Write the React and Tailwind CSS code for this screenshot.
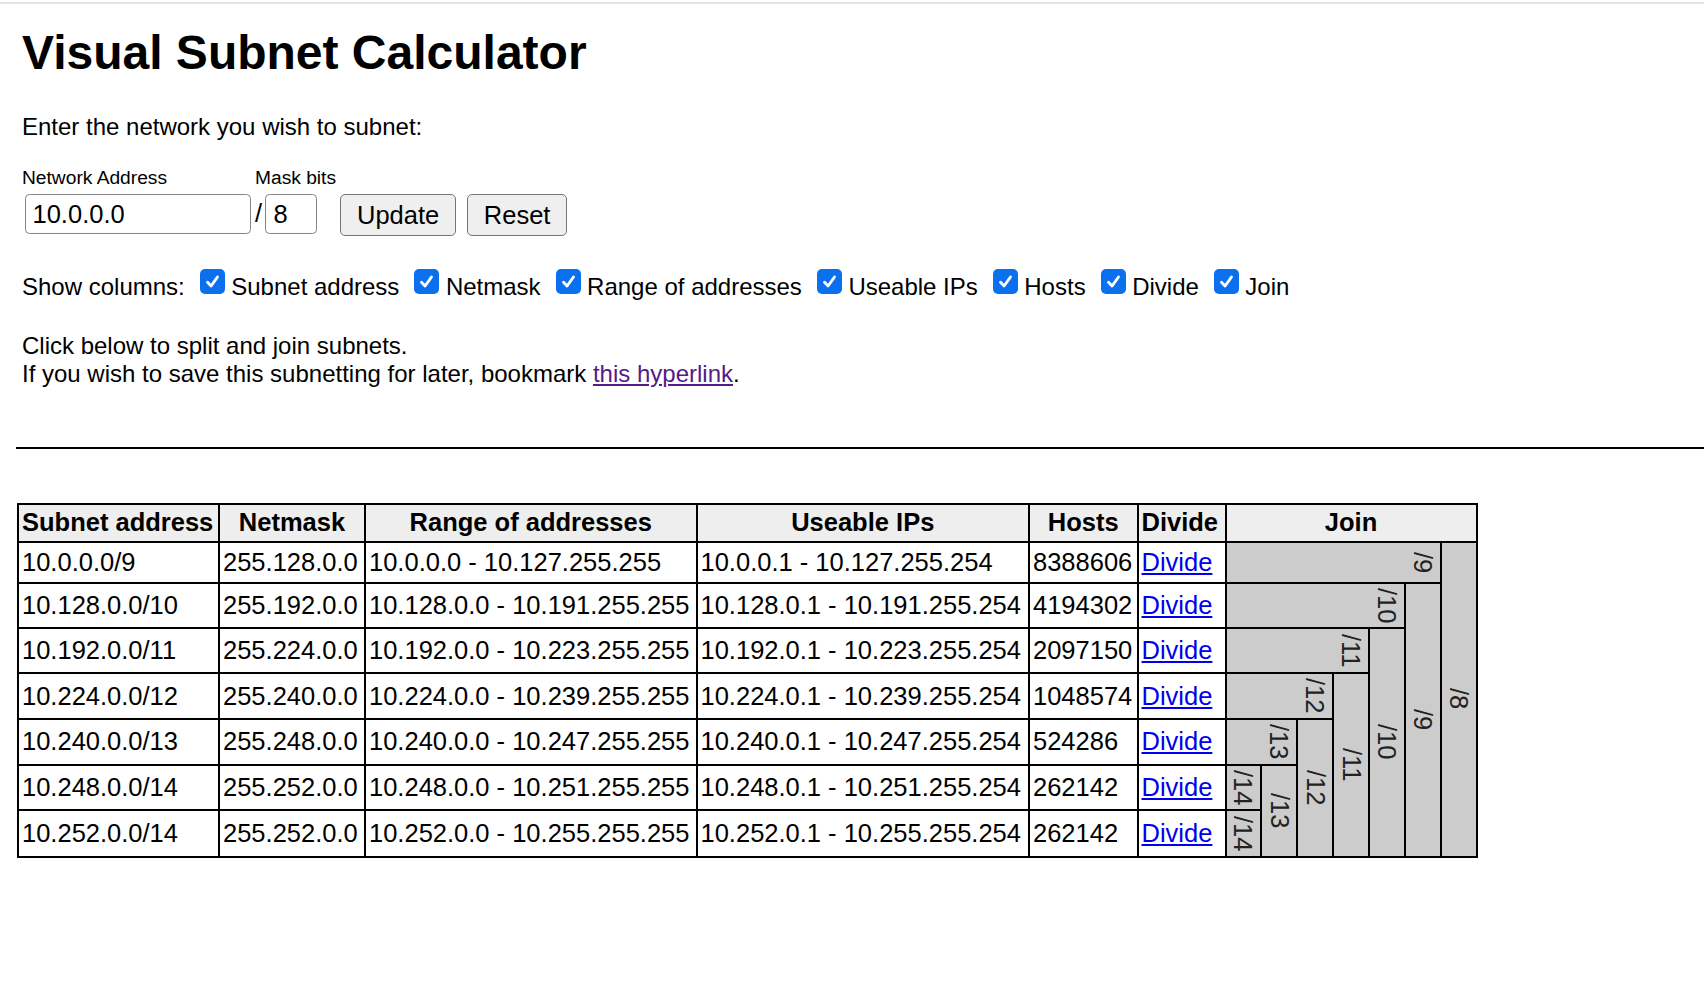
import React from "react";

const rows = [
  ["10.0.0.0/9", "255.128.0.0", "10.0.0.0 - 10.127.255.255", "10.0.0.1 - 10.127.255.254", "8388606"],
  ["10.128.0.0/10", "255.192.0.0", "10.128.0.0 - 10.191.255.255", "10.128.0.1 - 10.191.255.254", "4194302"],
  ["10.192.0.0/11", "255.224.0.0", "10.192.0.0 - 10.223.255.255", "10.192.0.1 - 10.223.255.254", "2097150"],
  ["10.224.0.0/12", "255.240.0.0", "10.224.0.0 - 10.239.255.255", "10.224.0.1 - 10.239.255.254", "1048574"],
  ["10.240.0.0/13", "255.248.0.0", "10.240.0.0 - 10.247.255.255", "10.240.0.1 - 10.247.255.254", "524286"],
  ["10.248.0.0/14", "255.252.0.0", "10.248.0.0 - 10.251.255.255", "10.248.0.1 - 10.251.255.254", "262142"],
  ["10.252.0.0/14", "255.252.0.0", "10.252.0.0 - 10.255.255.255", "10.252.0.1 - 10.255.255.254", "262142"],
];

const joins = [
  [{ t: "/9", c: 6 }, { t: "/8", r: 7 }],
  [{ t: "/10", c: 5 }, { t: "/9", r: 6 }],
  [{ t: "/11", c: 4 }, { t: "/10", r: 5 }],
  [{ t: "/12", c: 3 }, { t: "/11", r: 4 }],
  [{ t: "/13", c: 2 }, { t: "/12", r: 3 }],
  [{ t: "/14", c: 1 }, { t: "/13", r: 2 }],
  [{ t: "/14", c: 1 }],
];

const rowH = ["h-[41.5px]", "h-[44.5px]", "h-[45.6px]", "h-[45.6px]", "h-[45.7px]", "h-[45.6px]", "h-[46.5px]"];

function Check({ label }) {
  return (
    <>
      <span className="ml-[15px] inline-flex h-[25px] w-[25px] -translate-y-[5px] items-center justify-center rounded-[5px] bg-[#0b70ee]">
        <svg viewBox="0 0 16 16" className="h-[19px] w-[19px]">
          <path d="M3.8 8.6 L6.8 11.8 L12.2 4.2" fill="none" stroke="white" strokeWidth="2.4" strokeLinecap="round" strokeLinejoin="round" />
        </svg>
      </span>
      <span className="ml-[6.5px]">{label}</span>
    </>
  );
}

const td = "border-2 border-black px-[3px] align-middle";

export default function App() {
  return (
    <div className="min-h-[998px] bg-white text-black font-['Liberation_Sans',Arial,Helvetica,sans-serif]">
      <div className="mt-[2px] h-[2px] bg-[#e4e4e4]" />
      <div className="pl-[22px]">
        <h1 className="mt-[21.4px] text-[48px] font-bold leading-[56px]">Visual Subnet Calculator</h1>
        <p className="mt-[31.8px] text-[24px] leading-[28px]">Enter the network you wish to subnet:</p>
        <div className="mt-[25.4px] flex text-[19.2px] leading-[22px]">
          <span className="w-[233px]">Network Address</span>
          <span>Mask bits</span>
        </div>
        <div className="mt-[5.7px] flex items-start text-[25.5px] leading-[29px]">
          <div className="ml-[2.5px] flex h-[40px] w-[226px] items-center rounded-[4.5px] border border-[#858585] px-[7px] pt-[1px]">10.0.0.0</div>
          <span className="ml-[4.5px] mt-[5px]">/</span>
          <div className="ml-[2.5px] flex h-[40px] w-[52.5px] items-center rounded-[4.5px] border border-[#858585] px-[8px] pt-[1px]">8</div>
          <div className="ml-[23px] flex h-[41.7px] w-[116px] items-center justify-center rounded-[5px] border border-[#767676] bg-[#efefef]">Update</div>
          <div className="ml-[11px] flex h-[41.7px] w-[100px] items-center justify-center rounded-[5px] border border-[#767676] bg-[#efefef]">Reset</div>
        </div>
        <div className="mt-[37px] flex items-center text-[24px] leading-[28px]">
          <span>Show columns:</span>
          <Check label="Subnet address" />
          <Check label="Netmask" />
          <Check label="Range of addresses" />
          <Check label="Useable IPs" />
          <Check label="Hosts" />
          <Check label="Divide" />
          <Check label="Join" />
        </div>
        <p className="mt-[31.5px] text-[24px] leading-[27.6px]">
          Click below to split and join subnets.
          <br />
          If you wish to save this subnetting for later, bookmark{" "}
          <span className="text-[#551a8b] underline">this hyperlink</span>.
        </p>
      </div>
      <div className="ml-[16px] mt-[59px] h-[2px] bg-black" />
      <table className="ml-[17px] mt-[54px] w-[1458.5px] table-fixed border-collapse text-[25.5px] leading-[29px]">
        <colgroup>
          <col className="w-[201px]" />
          <col className="w-[146px]" />
          <col className="w-[331.5px]" />
          <col className="w-[332.5px]" />
          <col className="w-[108.5px]" />
          <col className="w-[88px]" />
          <col className="w-[35.86px]" />
          <col className="w-[35.86px]" />
          <col className="w-[35.86px]" />
          <col className="w-[35.86px]" />
          <col className="w-[35.86px]" />
          <col className="w-[35.86px]" />
          <col className="w-[35.86px]" />
        </colgroup>
        <thead>
          <tr className="h-[38px] bg-[#eeeeee] font-bold">
            <th className={td + " text-left"}>Subnet address</th>
            <th className={td}>Netmask</th>
            <th className={td}>Range of addresses</th>
            <th className={td}>Useable IPs</th>
            <th className={td}>Hosts</th>
            <th className={td + " text-left"}>Divide</th>
            <th className={td} colSpan={7}>Join</th>
          </tr>
        </thead>
        <tbody>
          {rows.map((r, i) => (
            <tr key={i} className={rowH[i]}>
              {r.map((c, j) => (
                <td key={j} className={td + " whitespace-nowrap"}>{c}</td>
              ))}
              <td className={td}>
                <span className="text-[#0000ee] underline">Divide</span>
              </td>
              {joins[i].map((j, k) =>
                j.c ? (
                  <td key={k} colSpan={j.c} className="border-2 border-black bg-[#cccccc] p-[3px] align-middle">
                    <div className="flex justify-end">
                      <span className="text-[#222] [writing-mode:vertical-rl]">{j.t}</span>
                    </div>
                  </td>
                ) : (
                  <td key={k} rowSpan={j.r} className="border-2 border-black bg-[#cccccc] p-[3px] align-middle">
                    <div className="flex justify-center">
                      <span className="text-[#222] [writing-mode:vertical-rl]">{j.t}</span>
                    </div>
                  </td>
                )
              )}
            </tr>
          ))}
        </tbody>
      </table>
    </div>
  );
}
